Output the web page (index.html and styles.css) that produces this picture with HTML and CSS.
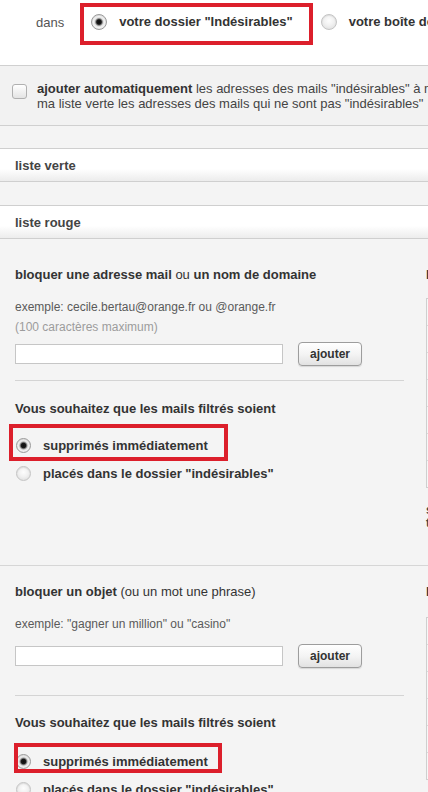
FILE: index.html
```html
<!DOCTYPE html>
<html lang="fr">
<head>
<meta charset="utf-8">
<title>Filtres anti-spam</title>
<link rel="stylesheet" href="styles.css">
</head>
<body>
<div class="page">
  <div class="dest">
    <span class="dans">dans</span>
    <span class="opt marked">
      <span class="radio big checked"></span>
      <span class="opt-label">votre dossier "Indésirables"</span>
    </span>
    <span class="opt">
      <span class="radio big"></span>
      <span class="opt-label">votre boîte de réception</span>
    </span>
  </div>

  <div class="auto">
    <span class="checkbox"></span>
    <p class="auto-text"><b>ajouter automatiquement</b> les adresses des mails "indésirables" à ma liste rouge et ajouter automatiquement à<br>ma liste verte les adresses des mails qui ne sont pas "indésirables"</p>
  </div>

  <div class="spacer"></div>
  <div class="bar">liste verte</div>
  <div class="spacer spacer-b"></div>
  <div class="bar">liste rouge</div>

  <section class="block block-one">
    <div class="left">
      <h3 class="title"><b>bloquer une adresse mail</b> ou <b>un nom de domaine</b></h3>
      <p class="hint">exemple: cecile.bertau@orange.fr ou @orange.fr</p>
      <p class="hint muted">(100 caractères maximum)</p>
      <div class="form-row">
        <input class="field" type="text">
        <button class="btn" type="button">ajouter</button>
      </div>
      <hr class="sep">
      <p class="question">Vous souhaitez que les mails filtrés soient</p>
      <ul class="choices">
        <li class="choice marked-a"><span class="radio checked"></span>supprimés immédiatement</li>
        <li class="choice"><span class="radio"></span>placés dans le dossier "indésirables"</li>
      </ul>
    </div>
    <div class="right">
      <h3 class="title"><b>liste des adresses bloquées</b></h3>
      <div class="table">
        <div class="row"></div><div class="row"></div><div class="row"></div><div class="row"></div><div class="row"></div><div class="row"></div><div class="row"></div>
      </div>
      <p class="links"><b>supprimer</b><br><b>tout supprimer</b></p>
    </div>
  </section>

  <section class="block block-two">
    <div class="left">
      <h3 class="title"><b>bloquer un objet</b> (ou un mot une phrase)</h3>
      <p class="hint">exemple: "gagner un million" ou "casino"</p>
      <div class="form-row">
        <input class="field" type="text">
        <button class="btn" type="button">ajouter</button>
      </div>
      <hr class="sep">
      <p class="question">Vous souhaitez que les mails filtrés soient</p>
      <ul class="choices">
        <li class="choice marked-b"><span class="radio checked"></span>supprimés immédiatement</li>
        <li class="choice"><span class="radio"></span>placés dans le dossier "indésirables"</li>
      </ul>
    </div>
    <div class="right">
      <h3 class="title"><b>liste des objets bloqués</b></h3>
      <div class="table">
        <div class="row"></div><div class="row"></div><div class="row"></div><div class="row"></div><div class="row"></div><div class="row"></div>
      </div>
    </div>
  </section>
</div>
</body>
</html>
```
FILE: styles.css
```css
html, body {
  margin: 0;
  padding: 0;
  overflow: hidden;
}
body {
  font-family: "Liberation Sans", Arial, sans-serif;
  color: #333;
  background: #f4f4f4;
}
.page {
  width: 900px;
}

/* destination row */
.dest {
  background: #fff;
  height: 44px;
  padding: 0 0 21px 36px;
  border-bottom: 1px solid #d0d0d0;
  display: flex;
  align-items: center;
  font-size: 13px;
}
.dans {
  color: #555;
  margin-right: 27px;
}
.opt {
  display: flex;
  align-items: center;
  gap: 12px;
  position: relative;
  line-height: 16px;
}
.opt + .opt {
  margin-left: 28px;
}
.opt-label {
  font-weight: bold;
  color: #333;
  white-space: nowrap;
}
.marked::before {
  content: "";
  position: absolute;
  left: -11px;
  right: -20px;
  top: -11px;
  bottom: -15px;
  border: 4px solid #dc1f2b;
}

/* radios / checkbox */
.radio {
  flex: none;
  display: inline-block;
  width: 13px;
  height: 13px;
  border-radius: 50%;
  border: 1px solid #c4c4c4;
  background: radial-gradient(circle at 50% 40%, #fdfdfd 0, #f1f1f1 45%, #d9d9d9 100%);
  box-shadow: inset 0 1px 1px rgba(0, 0, 0, 0.08);
}
.radio.big {
  width: 14px;
  height: 14px;
}
.radio.checked {
  border-color: #9a9a9a;
  background: radial-gradient(circle at 50% 50%, #0d0d0d 0, #1a1a1a 2.3px, #7a7a7a 3.2px, #dcdcdc 4.3px, #f3f3f3 5.5px, #cfcfcf 100%);
}
.checkbox {
  flex: none;
  width: 13px;
  height: 13px;
  margin-top: 3px;
  border: 1px solid #b0b0b0;
  border-radius: 3px;
  background: linear-gradient(#ffffff, #e4e4e4);
}

/* auto section */
.auto {
  background: #f2f2f2;
  height: 44px;
  padding: 15px 0 0 12px;
  border-bottom: 1px solid #d0d0d0;
  display: flex;
  align-items: flex-start;
  gap: 10px;
}
.auto-text {
  margin: 0;
  font-size: 13px;
  line-height: 15px;
  color: #444;
  white-space: nowrap;
}
.auto-text b {
  color: #333;
}

/* bars */
.spacer {
  height: 22px;
}
.spacer-b {
  height: 23px;
}
.bar {
  height: 30px;
  padding: 2px 0 0 15px;
  line-height: 30px;
  border-top: 1px solid #cfcfcf;
  border-bottom: 1px solid #cfcfcf;
  background: linear-gradient(to bottom, #fff 0%, #fff 62%, #ececec 100%);
  font-size: 13px;
  font-weight: bold;
  color: #444;
}

/* blocks */
.block {
  display: grid;
  grid-template-columns: 404px 1fr;
  column-gap: 22px;
  border-bottom: 1px solid #d6d6d6;
  font-size: 13px;
}
.left {
  padding-left: 15px;
}
.title {
  margin: 0;
  font-size: 13px;
  line-height: 16px;
  font-weight: normal;
  color: #333;
  white-space: nowrap;
}
.hint {
  margin: 0;
  font-size: 12px;
  line-height: 20px;
  color: #5a5a5a;
}
.muted {
  color: #9c9c9c;
}
.form-row {
  display: flex;
  align-items: center;
  gap: 15px;
  height: 24px;
}
.field {
  box-sizing: border-box;
  width: 268px;
  height: 20px;
  margin: 0;
  padding: 0 3px;
  border: 1px solid #c6c6c6;
  background: #fff;
}
.btn {
  box-sizing: border-box;
  width: 64px;
  height: 24px;
  margin: 0;
  padding: 0;
  border: 1px solid #9d9d9d;
  border-radius: 4px;
  background: linear-gradient(#ffffff 0%, #f4f4f4 50%, #e2e2e2 100%);
  box-shadow: 0 1px 1px rgba(0, 0, 0, 0.12);
  font-family: "Liberation Sans", Arial, sans-serif;
  font-size: 12px;
  font-weight: bold;
  color: #333;
}
.sep {
  margin: 0;
  height: 0;
  border: 0;
  border-top: 1px solid #d4d4d4;
}
.question {
  margin: 0;
  font-weight: bold;
  line-height: 16px;
  color: #333;
}
.choices {
  list-style: none;
  margin: 0;
  padding: 0;
}
.choice {
  position: relative;
  display: flex;
  align-items: center;
  gap: 12px;
  height: 28px;
  padding-left: 1px;
  font-weight: bold;
  color: #333;
  white-space: nowrap;
}
.marked-a::before {
  content: "";
  position: absolute;
  left: -6px;
  top: -7px;
  width: 219px;
  height: 37px;
  box-sizing: border-box;
  border: 4px solid #dc1f2b;
}
.marked-b::before {
  content: "";
  position: absolute;
  left: -1px;
  top: -4px;
  width: 208px;
  height: 30px;
  box-sizing: border-box;
  border: 4px solid #dc1f2b;
}

/* block one spacing */
.block-one .left {
  padding-top: 28px;
  padding-bottom: 78px;
}
.block-one .hint {
  margin-top: 14px;
}
.block-one .muted {
  margin-top: 0;
}
.block-one .form-row {
  margin-top: 5px;
}
.block-one .sep {
  margin-top: 14px;
}
.block-one .question {
  margin-top: 20px;
}
.block-one .choices {
  margin-top: 14px;
}
.block-one .right {
  padding-top: 28px;
}
.block-one .table {
  margin-top: 15px;
}

/* block two spacing */
.block-two .left {
  padding-top: 18px;
  padding-bottom: 20px;
}
.block-two .hint {
  margin-top: 14px;
}
.block-two .form-row {
  margin-top: 10px;
}
.block-two .sep {
  margin-top: 27px;
}
.block-two .question {
  margin-top: 19px;
}
.block-two .choices {
  margin-top: 16px;
}
.block-two .right {
  padding-top: 18px;
}
.block-two .table {
  margin-top: 17px;
}

/* right column */
.table {
  border: 1px solid #cfcfcf;
  background: #f7f7f7;
}
.row {
  height: 26px;
  border-bottom: 1px solid #dcdcdc;
}
.row:last-child {
  border-bottom: 0;
}
.links {
  margin: 16px 0 0;
  font-size: 12px;
  line-height: 13px;
  color: #444;
}
```
